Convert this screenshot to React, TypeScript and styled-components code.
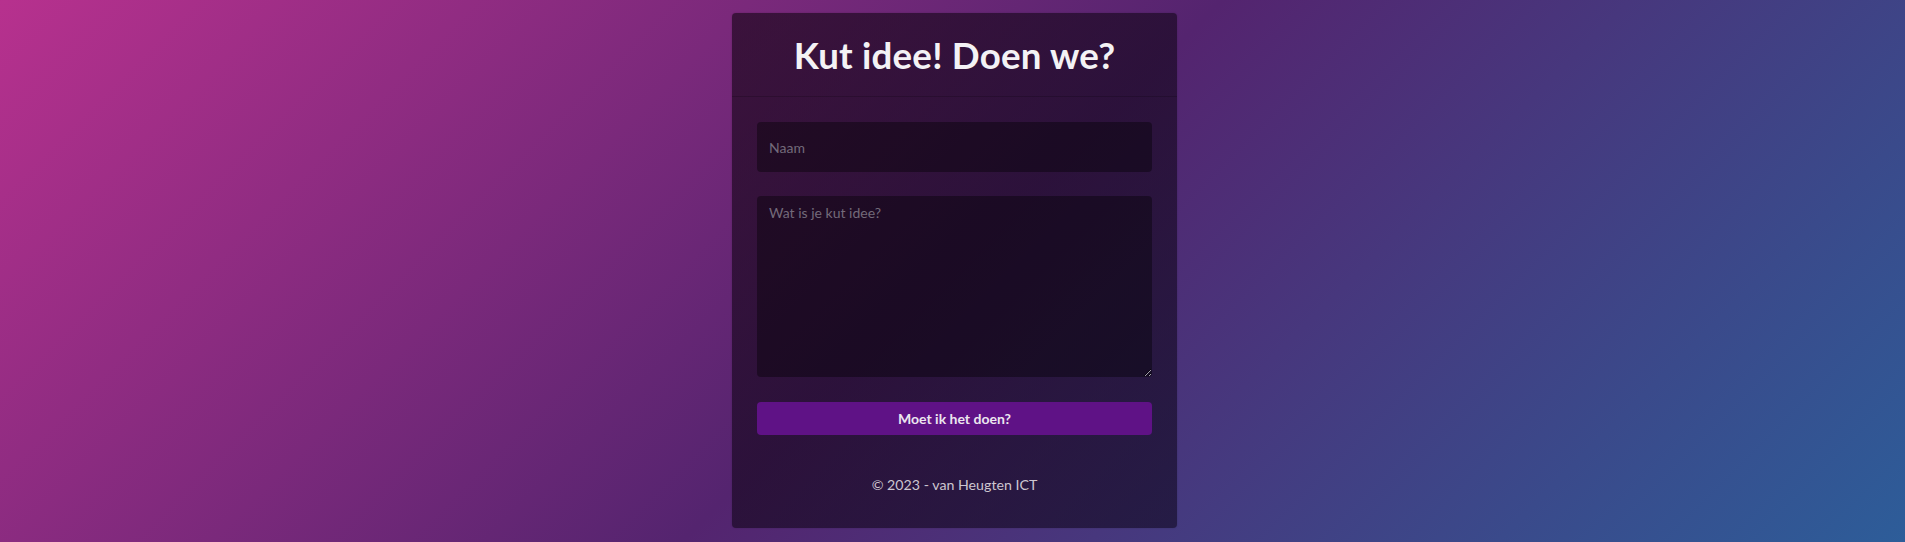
import React from "react";
import styled, { createGlobalStyle } from "styled-components";

const Global = createGlobalStyle`
  html, body { margin: 0; padding: 0; height: 100%; }
  body {
    font-family: Lato, "Noto Sans", sans-serif;
    background: linear-gradient(135deg, #b7318e 0%, #54246f 50%, #2d5d99 100%);
    min-height: 542px;
  }
  #root { min-height: 542px; }
`;

const Page = styled.main`
  display: flex;
  justify-content: center;
  padding-top: 13px;
  padding-left: 4px;
`;

const Card = styled.section`
  width: 445px;
  height: 515px;
  box-sizing: border-box;
  background: linear-gradient(135deg, rgba(20, 4, 20, 0.62) 0%, rgba(14, 6, 28, 0.58) 100%);
  border-radius: 4px;
  display: flex;
  flex-direction: column;
  box-shadow: 0 0 2px rgba(0, 0, 0, 0.2);
`;

const Header = styled.header`
  height: 84px;
  box-sizing: border-box;
  border-bottom: 1px solid rgba(0, 0, 0, 0.18);
  display: flex;
  align-items: center;
  justify-content: center;
`;

const Title = styled.h1`
  margin: 0;
  font-size: 36.7px;
  font-weight: 700;
  color: #f4f2f5;
  letter-spacing: 0.2px;
`;

const Body = styled.form`
  padding: 25px 25px 0;
  display: flex;
  flex-direction: column;
`;

const fieldStyles = `
  box-sizing: border-box;
  width: 100%;
  border: none;
  border-radius: 4px;
  background: rgba(0, 0, 0, 0.38);
  color: #ddd;
  font-family: Lato, "Noto Sans", sans-serif;
  font-size: 14px;
  padding: 0 12px;
  outline: none;
  &::placeholder { color: #736a7a; }
`;

const Input = styled.input`
  ${fieldStyles}
  height: 50px;
`;

const TextArea = styled.textarea`
  ${fieldStyles}
  height: 181px;
  margin-top: 24px;
  padding-top: 8px;
  resize: vertical;
`;

const Button = styled.button`
  margin-top: 25px;
  height: 33px;
  border: none;
  border-radius: 4px;
  background: #5f1286;
  color: #ece6ef;
  font-family: Lato, "Noto Sans", sans-serif;
  font-weight: 700;
  font-size: 14px;
  cursor: pointer;
`;

const Footer = styled.footer`
  margin-top: 41px;
  text-align: center;
  color: #cdc6d0;
  font-size: 14.2px;
`;

export default function App() {
  return (
    <>
      <Global />
      <Page>
        <Card>
          <Header>
            <Title>Kut idee! Doen we?</Title>
          </Header>
          <Body onSubmit={(e) => e.preventDefault()}>
            <Input placeholder="Naam" />
            <TextArea placeholder="Wat is je kut idee?" />
            <Button type="submit">Moet ik het doen?</Button>
          </Body>
          <Footer>© 2023 - van Heugten ICT</Footer>
        </Card>
      </Page>
    </>
  );
}
